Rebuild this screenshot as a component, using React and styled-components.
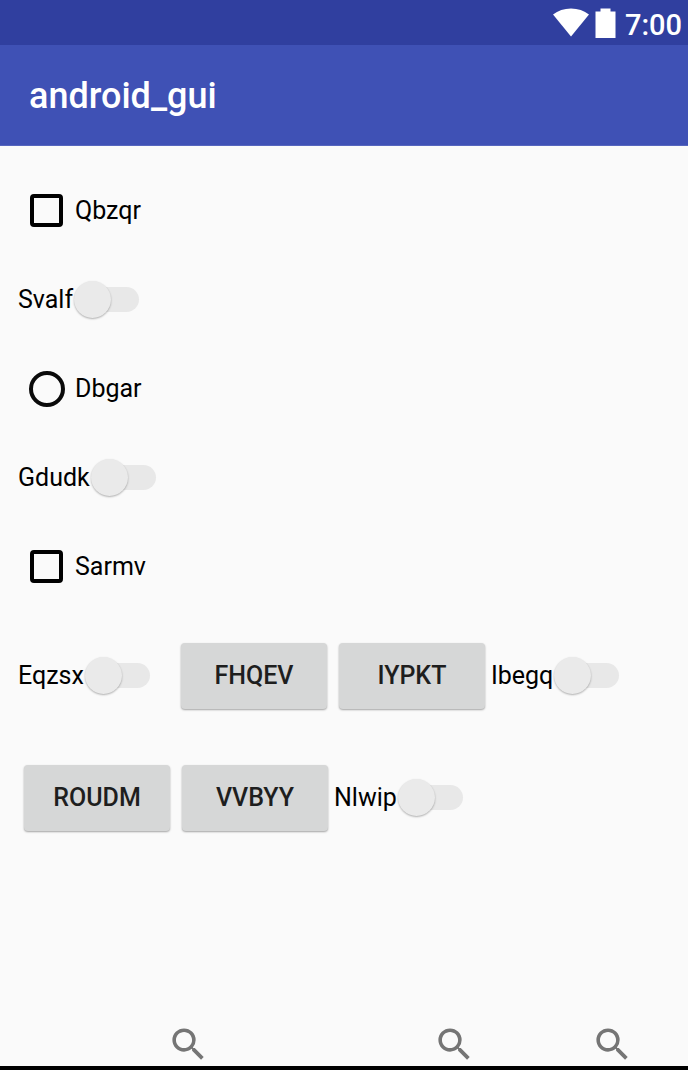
import React from "react";
import styled, { createGlobalStyle } from "styled-components";

const GlobalStyle = createGlobalStyle`
  *, *::before, *::after { box-sizing: border-box; }
  body {
    margin: 0;
    background: #fafafa;
    color: #000;
    font-family: Roboto, "Liberation Sans", sans-serif;
    font-size: 25px;
    line-height: 32px;
  }
`;

const Screen = styled.div`
  display: flex;
  flex-direction: column;
  min-height: 100vh;
`;

const StatusBar = styled.div`
  display: flex;
  align-items: center;
  justify-content: flex-end;
  height: 45px;
  padding-right: 6px;
  background: #303f9f;
  color: #fff;
`;

const StatusIcon = styled.svg`
  display: block;
  width: ${(p) => p.$width}px;
  height: 30px;
  margin-right: ${(p) => p.$gap}px;
  fill: #fff;
`;

const Clock = styled.span`
  font-size: 29px;
  font-weight: 500;
  padding-top: 4px;
`;

const AppBar = styled.header`
  display: flex;
  align-items: center;
  height: 101px;
  padding: 2px 29px 0;
  background: #3f51b5;
  border-bottom: 1px solid #5666be;
`;

const Title = styled.h1`
  margin: 0;
  color: #fff;
  font-size: 36px;
  line-height: 44px;
  font-weight: 500;
`;

const Main = styled.main`
  flex: 1;
  padding: 20px 18px 0;
`;

const Row = styled.div`
  display: flex;
  align-items: center;
  height: 89px;
`;

const ButtonRows = styled.div`
  padding-top: 4px;
`;

const ButtonRow = styled(Row)`
  height: 122px;
`;

const Label = styled.label`
  display: flex;
  align-items: center;
  margin-right: ${(p) => p.$after || 0}px;
`;

const CheckBox = styled.input.attrs({ type: "checkbox" })`
  appearance: none;
  width: 33px;
  height: 33px;
  margin: 0 12px;
  border: 4px solid #000;
  border-radius: 4px;
  &:checked { background: #000; }
`;

const Radio = styled.input.attrs({ type: "radio" })`
  appearance: none;
  width: 36px;
  height: 36px;
  margin: 0 10px 0 11px;
  border: 4px solid #0a0a0a;
  border-radius: 50%;
  &:checked { box-shadow: inset 0 0 0 5px #fafafa; background: #0a0a0a; }
`;

const Toggle = styled.input.attrs({ type: "checkbox", role: "switch" })`
  appearance: none;
  display: grid;
  align-items: center;
  width: 65px;
  height: 37px;
  margin: 0 0 1px 1px;
  &::before, &::after {
    content: "";
    grid-area: 1 / 1;
  }
  &::before {
    height: 25px;
    margin-left: 10px;
    border-radius: 13px;
    background: #e8e8e8;
  }
  &::after {
    width: 37px;
    height: 37px;
    border-radius: 50%;
    background: #eaeaea;
    box-shadow: 0 1px 2px rgba(0, 0, 0, 0.3);
  }
  &:checked::after { justify-self: end; }
`;

const Button = styled.button`
  width: 146px;
  height: 66px;
  margin: 0 6px;
  padding: 0;
  border: 0;
  border-radius: 4px;
  background: #d6d7d7;
  box-shadow: 0 1px 2px rgba(0, 0, 0, 0.35);
  color: #1e1e1e;
  font: inherit;
  font-weight: 500;
`;

const SearchBar = styled.footer`
  display: flex;
  justify-content: flex-end;
  padding-right: 54px;
  border-bottom: 4px solid #000;
`;

const SearchButton = styled.button`
  width: 43px;
  height: 43px;
  margin-left: ${(p) => p.$before || 0}px;
  padding: 0;
  border: 0;
  background: none;
  svg { display: block; fill: #757575; }
`;

const Switch = ({ name, after }) => (
  <Label $after={after}>
    {name}
    <Toggle />
  </Label>
);

const Search = ({ before }) => (
  <SearchButton type="button" aria-label="Search" $before={before}>
    <svg viewBox="0 0 24 24" width="43" height="43">
      <path d="M15.5 14h-.79l-.28-.27A6.47 6.47 0 0 0 16 9.5 6.5 6.5 0 1 0 9.5 16c1.61 0 3.09-.59 4.23-1.57l.27.28v.79l5 4.99L20.49 19l-4.99-5zm-6 0C7.01 14 5 11.99 5 9.5S7.01 5 9.5 5 14 7.01 14 9.5 11.99 14 9.5 14z" />
    </svg>
  </SearchButton>
);

export default function App() {
  return (
    <Screen>
      <GlobalStyle />
      <StatusBar>
        <StatusIcon $width={36} $gap={6} viewBox="0 0 36 30">
          <path d="M0 6.5C5 2.500 11 .500 18 .500S31 2.500 36 6.500L18 28.500z" />
        </StatusIcon>
        <StatusIcon $width={21} $gap={9} viewBox="0 0 21 30">
          <path d="M5.500 .500H15.500V3.500H20.500V30H.500V3.500H5.500z" />
        </StatusIcon>
        <Clock>7:00</Clock>
      </StatusBar>
      <AppBar>
        <Title>android_gui</Title>
      </AppBar>
      <Main>
        <Row><Label><CheckBox />Qbzqr</Label></Row>
        <Row><Switch name="Svalf" /></Row>
        <Row><Label><Radio />Dbgar</Label></Row>
        <Row><Switch name="Gdudk" /></Row>
        <Row><Label><CheckBox />Sarmv</Label></Row>
        <ButtonRows>
          <ButtonRow>
            <Switch name="Eqzsx" after={25} />
            <Button type="button">FHQEV</Button>
            <Button type="button">IYPKT</Button>
            <Switch name="Ibegq" />
          </ButtonRow>
          <ButtonRow>
            <Button type="button">ROUDM</Button>
            <Button type="button">VVBYY</Button>
            <Switch name="Nlwip" />
          </ButtonRow>
        </ButtonRows>
      </Main>
      <SearchBar>
        <Search />
        <Search before={223} />
        <Search before={115} />
      </SearchBar>
    </Screen>
  );
}
